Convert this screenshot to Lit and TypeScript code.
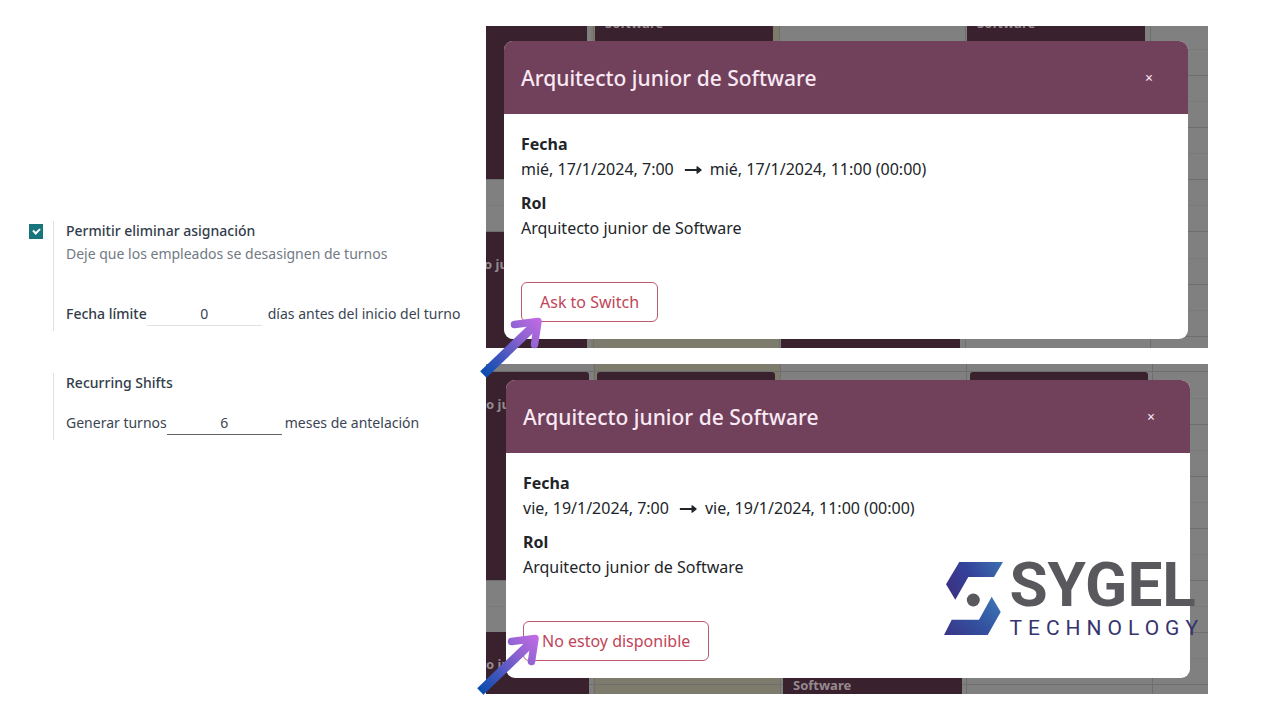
import { LitElement, html, svg, css } from "lit";
import { customElement, property } from "lit/decorators.js";

type Block = { x: number; y: number; w: number; h: number };
type Note = { x: number; y: number; text: string };
type Scene = { olive: Block[]; shifts: Block[]; columns: number[]; rows: number[]; halfRows: number[]; notes: Note[] };

const sceneA: Scene = {
  olive: [{ x: 105, y: 0, w: 189, h: 322 }],
  shifts: [
    { x: -10, y: -10, w: 111, h: 163 },
    { x: 109, y: -10, w: 178, h: 60 },
    { x: 481, y: -10, w: 178, h: 60 },
    { x: -10, y: 206, w: 111, h: 140 },
    { x: 295, y: 290, w: 179, h: 60 },
  ],
  columns: [107, 293, 479, 664],
  rows: [49, 101, 153, 205, 258, 310],
  halfRows: [23, 75, 127, 179, 232, 284],
  notes: [
    { x: 119, y: 2, text: "Software" },
    { x: 491, y: 2, text: "Software" },
    { x: -2, y: 243, text: "o ju" },
  ],
};

const sceneB: Scene = {
  olive: [{ x: 107, y: 0, w: 187, h: 330 }],
  shifts: [
    { x: -10, y: 8, w: 113, h: 208 },
    { x: 111, y: 8, w: 178, h: 60 },
    { x: 484, y: 8, w: 178, h: 60 },
    { x: -10, y: 268, w: 113, h: 90 },
    { x: 297, y: 290, w: 179, h: 60 },
  ],
  columns: [108, 294, 480, 666],
  rows: [7, 60, 112, 164, 216, 268, 320],
  halfRows: [34, 86, 138, 190, 242, 294],
  notes: [
    { x: 0, y: 45, text: "o ju" },
    { x: 0, y: 305, text: "o ju" },
    { x: 307, y: 326, text: "Software" },
  ],
};

@customElement("shift-backdrop")
class ShiftBackdrop extends LitElement {
  @property({ attribute: false }) scene!: Scene;

  static styles = css`
    :host { display: block; position: absolute; inset: 0; overflow: hidden; background: #808080; }
    .canvas { display: block; width: 100%; height: 100%; }
    .olive { fill: #7d7b6c; }
    .shift { fill: #39212d; }
    .line { fill: none; stroke: #6e6e6e; }
    .half { fill: none; stroke: #7a7a7a; }
    .note { fill: #958a90; font: bold 13px "Noto Sans", sans-serif; }
  `;

  render() {
    const s = this.scene;
    return html`<svg class="canvas" aria-hidden="true">
      ${s.olive.map((b) => svg`<rect class="olive" x=${b.x} y=${b.y} width=${b.w} height=${b.h} />`)}
      ${s.halfRows.map((y) => svg`<path class="half" d="M0 ${y + 0.5}H2000" />`)}
      ${s.rows.map((y) => svg`<path class="line" d="M0 ${y + 0.5}H2000" />`)}
      ${s.columns.map((x) => svg`<path class="line" d="M${x + 0.5} 0V400" />`)}
      ${s.shifts.map((b) => svg`<rect class="shift" x=${b.x} y=${b.y} width=${b.w} height=${b.h} rx="3" />`)}
      ${s.notes.map((n) => svg`<text class="note" x=${n.x} y=${n.y}>${n.text}</text>`)}
    </svg>`;
  }
}

@customElement("pointer-arrow")
class PointerArrow extends LitElement {
  static styles = css`
    :host { display: block; pointer-events: none; }
    .arrow { display: block; fill: none; stroke: url(#g); }
  `;

  render() {
    return html`<svg class="arrow" width="64" height="62" viewBox="0 0 64 62" aria-hidden="true">
      <defs>
        <linearGradient id="g" gradientUnits="userSpaceOnUse" x1="4" y1="58" x2="60" y2="4">
          <stop offset="0" stop-color="#0a4db0" />
          <stop offset="0.3" stop-color="#3f55bd" />
          <stop offset="0.65" stop-color="#8a62cf" />
          <stop offset="1" stop-color="#c06be4" />
        </linearGradient>
      </defs>
      <path stroke="url(#g)" stroke-width="9" d="M3.300 58.500L56 8" />
      <path stroke="url(#g)" stroke-width="7.500" stroke-linecap="round" stroke-linejoin="round" d="M34.500 8.500L58 5.500L54.500 28.500" />
    </svg>`;
  }
}

@customElement("shift-dialog")
class ShiftDialog extends LitElement {
  @property() heading = "";
  @property() from = "";
  @property() to = "";
  @property() job = "";
  @property() action = "";

  static styles = css`
    :host { display: block; position: relative; border-radius: 9px; overflow: hidden; background: #fff; color: #212529; font: 16px/25px "Noto Sans", sans-serif; }
    .head { display: flex; align-items: center; justify-content: space-between; height: 73px; padding: 0 30px 0 17px; background: #71405b; color: #f8e9f3; }
    .title { margin: 0; font-size: 21px; line-height: 30px; font-weight: 500; }
    .close { width: 18px; height: 24px; padding: 0; border: 0; background: none; color: #f3dfec; font: 500 14px/24px "Noto Sans", sans-serif; }
    .body { display: flex; flex-direction: column; align-items: flex-start; padding: 18px 17px 17px; }
    .facts { margin: 0 0 41px; display: grid; row-gap: 9px; }
    .term { font-weight: 700; }
    .value { margin: 0; display: flex; align-items: center; }
    .to { width: 18px; height: 10px; margin: 0 8px 0 10px; fill: #212529; }
    .action { height: 40px; padding: 0 18px; border: 1px solid #bd5a6e; border-radius: 6px; background: #fff; color: #c04558; font: 16px/24px "Noto Sans", sans-serif; }
  `;

  render() {
    return html`
      <header class="head">
        <h2 class="title">${this.heading}</h2>
        <button class="close" aria-label="Cerrar">×</button>
      </header>
      <div class="body">
        <dl class="facts">
          <div>
            <dt class="term">Fecha</dt>
            <dd class="value">
              <span>${this.from}</span>
              <svg class="to" viewBox="0 0 18 10" aria-hidden="true"><path d="M1 3.900H12.500V1.500Q12.700 .9 13.400 1.300L17.500 4.600Q17.900 5 17.500 5.400L13.400 8.700Q12.700 9.100 12.500 8.500V6.100H1Q.5 5 1 3.900Z" /></svg>
              <span>${this.to}</span>
            </dd>
          </div>
          <div>
            <dt class="term">Rol</dt>
            <dd class="value">${this.job}</dd>
          </div>
        </dl>
        <button class="action">${this.action}</button>
      </div>
    `;
  }
}

@customElement("sygel-logo")
class SygelLogo extends LitElement {
  static styles = css`
    :host { display: flex; gap: 5px; font-family: "Roboto", sans-serif; }
    .mark { display: block; flex: none; }
    .words { display: flex; flex-direction: column; }
    .name { font-size: 62px; line-height: 50px; font-weight: 700; color: #59595d; }
    .sub { margin-top: 6px; font-size: 21px; line-height: 24px; letter-spacing: 6px; color: #35346f; white-space: nowrap; }
  `;

  render() {
    return html`
      <svg class="mark" width="60" height="76" viewBox="0 0 60 76" aria-hidden="true">
        <defs>
          <linearGradient id="top" x1="0" y1="0.4" x2="1" y2="0">
            <stop offset="0" stop-color="#3a3487" /><stop offset="0.4" stop-color="#34439a" /><stop offset="1" stop-color="#3c6fb0" />
          </linearGradient>
          <linearGradient id="low" x1="0" y1="1" x2="1" y2="0.2">
            <stop offset="0" stop-color="#3a3487" /><stop offset="0.5" stop-color="#33509f" /><stop offset="1" stop-color="#3b72b2" />
          </linearGradient>
        </defs>
        <path fill="url(#top)" d="M15.300 2H59L50 17H24.300L11.300 39.700L2 24.300Z" />
        <path fill="url(#low)" d="M0 75L7.700 59.700H35L47.700 36.700L56.700 52L43.700 75Z" />
        <circle cx="29.300" cy="40" r="6.500" fill="#59595d" />
      </svg>
      <div class="words">
        <span class="name">SYGEL</span>
        <span class="sub">TECHNOLOGY</span>
      </div>
    `;
  }
}

@customElement("app-root")
class AppRoot extends LitElement {
  static styles = css`
    :host { display: block; min-height: 100vh; background: #fff; color: #3b4552; font: 14px/20px "Noto Sans", sans-serif; }
    .page { display: grid; grid-template-columns: 486px minmax(0, 1fr); padding: 26px 72px 26px 0; }
    .settings { display: flex; flex-direction: column; gap: 42px; padding: 195px 0 0 29px; }
    .setting { display: grid; grid-template-columns: 24px 1fr; }
    .content { border-left: 1px solid #dcdfe3; padding-left: 12px; }
    .tick { appearance: none; display: grid; place-items: center; width: 14px; height: 15px; margin: 3px 0 0; background: #17757b; }
    .tick:checked::after { content: ""; width: 5px; height: 3px; border: solid #fff; border-width: 0 0 2px 2px; transform: translateY(-1px) rotate(-45deg); }
    .label { display: block; font-weight: 500; color: #323c4a; }
    .hint { margin: 0; color: #727a84; line-height: 26px; }
    .row { display: flex; align-items: center; white-space: nowrap; }
    .deadline { margin-top: 35px; padding-bottom: 5px; }
    .recurring { margin-top: 18px; padding-bottom: 5px; }
    .num { width: 115px; height: 24px; box-sizing: border-box; padding: 0; border: 0; border-bottom: 1px solid #dfe2e6; background: none; color: inherit; font: inherit; text-align: center; }
    .num.active { border-color: #5f6368; }
    .after { margin-left: 6px; }
    .near { margin-left: 3px; }
    .shots { display: flex; flex-direction: column; gap: 16px; }
    .shot { position: relative; }
    .first { padding: 15px 20px 9px 18px; z-index: 1; }
    .second { padding: 16px 18px 16px 20px; }
    .arrow { position: absolute; left: -6px; bottom: -30px; }
    .second .arrow { left: -9px; bottom: -1px; }
    .logo { position: absolute; right: 4px; bottom: 54px; }
  `;

  render() {
    return html`
      <main class="page">
        <section class="settings">
          <div class="setting">
            <input class="tick" id="allow" type="checkbox" checked />
            <div class="content">
              <label class="label" for="allow">Permitir eliminar asignación</label>
              <p class="hint">Deje que los empleados se desasignen de turnos</p>
              <div class="row deadline">
                <label class="label" for="days">Fecha límite</label>
                <input class="num" id="days" type="text" value="0" />
                <span class="after">días antes del inicio del turno</span>
              </div>
            </div>
          </div>
          <div class="setting">
            <span></span>
            <div class="content">
              <span class="label">Recurring Shifts</span>
              <div class="row recurring">
                <label for="months">Generar turnos</label>
                <input class="num active" id="months" type="text" value="6" />
                <span class="near">meses de antelación</span>
              </div>
            </div>
          </div>
        </section>
        <section class="shots">
          <div class="shot first">
            <shift-backdrop .scene=${sceneA}></shift-backdrop>
            <shift-dialog
              heading="Arquitecto junior de Software"
              from="mié, 17/1/2024, 7:00"
              to="mié, 17/1/2024, 11:00 (00:00)"
              job="Arquitecto junior de Software"
              action="Ask to Switch"
            ></shift-dialog>
            <pointer-arrow class="arrow"></pointer-arrow>
          </div>
          <div class="shot second">
            <shift-backdrop .scene=${sceneB}></shift-backdrop>
            <shift-dialog
              heading="Arquitecto junior de Software"
              from="vie, 19/1/2024, 7:00"
              to="vie, 19/1/2024, 11:00 (00:00)"
              job="Arquitecto junior de Software"
              action="No estoy disponible"
            ></shift-dialog>
            <pointer-arrow class="arrow"></pointer-arrow>
            <sygel-logo class="logo"></sygel-logo>
          </div>
        </section>
      </main>
    `;
  }
}
